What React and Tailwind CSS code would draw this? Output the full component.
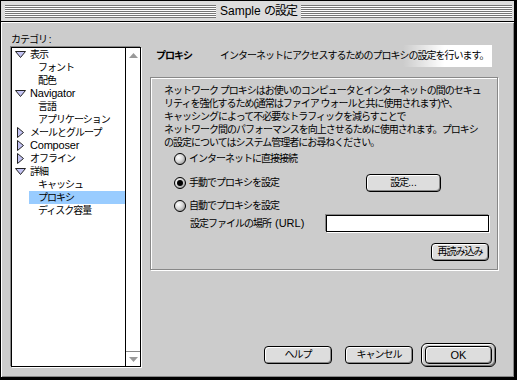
import React from "react";

// Mac OS 8 style disclosure triangles
const TriDown = () => (
  <svg width="11" height="7" viewBox="0 0 11 7">
    <path d="M0.5 0.5H10.5L5.5 6.5Z" fill="#c4c4f4" stroke="#222" strokeLinejoin="round" />
  </svg>
);

const TriRight = () => (
  <svg width="7" height="11" viewBox="0 0 7 11">
    <path d="M0.5 0.5L6.5 5.5L0.5 10.5Z" fill="#c4c4f4" stroke="#222" strokeLinejoin="round" />
  </svg>
);

const ScrollUp = () => (
  <svg width="9" height="5" viewBox="0 0 9 5">
    <path d="M0 5H9L4.5 0Z" fill="#999" />
  </svg>
);

const ScrollDown = () => (
  <svg width="9" height="5" viewBox="0 0 9 5">
    <path d="M0 0H9L4.5 5Z" fill="#999" />
  </svg>
);

const tree = [
  { label: "表示", level: 0, open: true },
  { label: "フォント", level: 1 },
  { label: "配色", level: 1 },
  { label: "Navigator", level: 0, open: true, latin: true },
  { label: "言語", level: 1 },
  { label: "アプリケーション", level: 1 },
  { label: "メールとグループ", level: 0, open: false },
  { label: "Composer", level: 0, open: false, latin: true },
  { label: "オフライン", level: 0, open: false },
  { label: "詳細", level: 0, open: true },
  { label: "キャッシュ", level: 1 },
  { label: "プロキシ", level: 1, selected: true },
  { label: "ディスク容量", level: 1 },
];

const MacButton = ({ children, className = "" }) => (
  <div
    className={`flex h-[18px] items-center justify-center rounded-[4px] border border-black bg-[#dddddd] shadow-[inset_1px_1px_0_#ffffff,inset_-1px_-1px_0_#888888] ${className}`}
  >
    {children}
  </div>
);

const Radio = ({ checked }) => (
  <span className="flex h-[12px] w-[12px] shrink-0 items-center justify-center rounded-full border border-black bg-[radial-gradient(circle_at_35%_35%,#ffffff_0%,#d6d6d6_45%,#7a7a7a_100%)]">
    {checked && <span className="h-[6px] w-[6px] rounded-full bg-black" />}
  </span>
);

const App = () => {
  return (
    <div className="flex h-[380px] w-[517px] flex-col border-t border-l border-r-[3px] border-b-[3px] border-black bg-[#cccccc] font-['Liberation_Sans','Noto_Sans_CJK_JP',sans-serif] text-[10px] leading-none tracking-[-1px] text-black">
      {/* title bar */}
      <div className="flex h-[21px] shrink-0 items-center border-b border-black bg-[#dddddd] pl-[4px] pr-[2px]">
        <div className="h-[13px] flex-1 bg-[repeating-linear-gradient(to_bottom,#777777_0px,#777777_1px,#ffffff_1px,#ffffff_2px)]" />
        <div className="px-[4px] text-[12px] whitespace-nowrap">
          <span className="tracking-normal">Sample </span>
          <span className="tracking-[-1px]">の設定</span>
        </div>
        <div className="h-[13px] flex-1 bg-[repeating-linear-gradient(to_bottom,#777777_0px,#777777_1px,#ffffff_1px,#ffffff_2px)]" />
      </div>

      {/* body */}
      <div className="flex flex-1 pt-[11px] pb-[10px] pl-[10px] shadow-[inset_1px_1px_0_#ffffff,inset_-1px_-1px_0_#888888]">
        {/* category column */}
        <div className="flex w-[130px] flex-col">
          <div className="flex h-[14px] items-center whitespace-nowrap">
            カテゴリ :
          </div>
          <div className="flex flex-1 border border-black bg-white shadow-[-1px_-1px_0_#888888,1px_1px_0_#ffffff]">
            <div className="flex-1">
              {tree.map((item) =>
                item.level === 0 ? (
                  <div key={item.label} className="flex h-[13px] items-center whitespace-nowrap">
                    <span className="flex w-[18px] items-center">
                      {item.open ? (
                        <span className="ml-[3px] flex">
                          <TriDown />
                        </span>
                      ) : (
                        <span className="ml-[5px] flex">
                          <TriRight />
                        </span>
                      )}
                    </span>
                    <span className={item.latin ? "text-[11px] tracking-[-0.2px]" : ""}>{item.label}</span>
                  </div>
                ) : (
                  <div key={item.label} className="flex h-[13px] whitespace-nowrap pl-[17px]">
                    <span
                      className={`flex flex-1 items-center pl-[9px] ${item.selected ? "bg-[#99ccff]" : ""}`}
                    >
                      {item.label}
                    </span>
                  </div>
                )
              )}
            </div>
            <div className="flex w-[15px] flex-col border-l border-black">
              <div className="flex h-[14px] items-center justify-center">
                <ScrollUp />
              </div>
              <div className="flex-1" />
              <div className="flex h-[15px] items-center justify-center border-t border-[#888888]">
                <ScrollDown />
              </div>
            </div>
          </div>
        </div>

        {/* settings column */}
        <div className="ml-[9px] flex w-[348px] flex-col">
          <div className="mt-[12px] flex h-[22px] w-[342px] items-center whitespace-nowrap pl-[6px] bg-[linear-gradient(to_right,transparent_74%,#ffffff_86%)]">
            <span className="w-[64px] font-bold">プロキシ</span>
            <span>インターネットにアクセスするためのプロキシの設定を行います。</span>
          </div>

          <div className="mt-[10px] flex h-[193px] flex-col border border-[#888888] pt-[6px] pr-[8px] pl-[13px] shadow-[inset_1px_1px_0_#ffffff,1px_1px_0_#ffffff]">
            <div className="whitespace-pre leading-[13px]">
              <div>ネットワーク プロキシはお使いのコンピュータとインターネットの間のセキュ</div>
              <div>リティを強化するため(通常はファイア ウォールと共に使用されます)や、</div>
              <div>キャッシングによって不必要なトラフィックを減らすことで</div>
              <div>ネットワーク間のパフォーマンスを向上させるために使用されます。プロキシ</div>
              <div>の設定についてはシステム管理者にお尋ねください。</div>
            </div>

            <div className="mt-[1px] flex h-[18px] items-center gap-[3px] pl-[10px] whitespace-nowrap">
              <Radio />
              <span>インターネットに直接接続</span>
            </div>

            <div className="mt-[6px] flex h-[18px] items-center gap-[3px] pl-[10px] whitespace-nowrap">
              <Radio checked />
              <span>手動でプロキシを設定</span>
              <MacButton className="mr-[48px] ml-auto w-[75px]">
                設定<span className="tracking-normal">...</span>
              </MacButton>
            </div>

            <div className="mt-[7px] flex h-[14px] items-center gap-[3px] pl-[10px] whitespace-nowrap">
              <Radio />
              <span>自動でプロキシを設定</span>
            </div>

            <div className="mt-[2px] flex h-[17px] items-center pl-[26px] whitespace-nowrap">
              <span>設定ファイルの場所</span>
              <span className="ml-[4px] text-[11px] tracking-normal">(URL)</span>
              <div className="ml-auto h-[17px] w-[163px] border border-black bg-white shadow-[-1px_-1px_0_#888888,1px_1px_0_#ffffff]" />
            </div>

            <div className="mt-[11px] flex justify-end">
              <MacButton className="w-[58px]">再読み込み</MacButton>
            </div>
          </div>

          <div className="mt-auto flex h-[24px] items-center justify-end pr-[2px]">
            <MacButton className="mr-[13px] w-[68px]">ヘルプ</MacButton>
            <MacButton className="mr-[8px] w-[68px]">キャンセル</MacButton>
            <div className="flex h-[24px] w-[75px] items-center justify-center rounded-[6px] border border-black bg-[#cccccc] shadow-[inset_1px_1px_0_#ffffff,inset_-1px_-1px_0_#777777]">
              <MacButton className="w-[67px] text-[11px] tracking-normal">OK</MacButton>
            </div>
          </div>
        </div>
      </div>
    </div>
  );
};

export default App;
